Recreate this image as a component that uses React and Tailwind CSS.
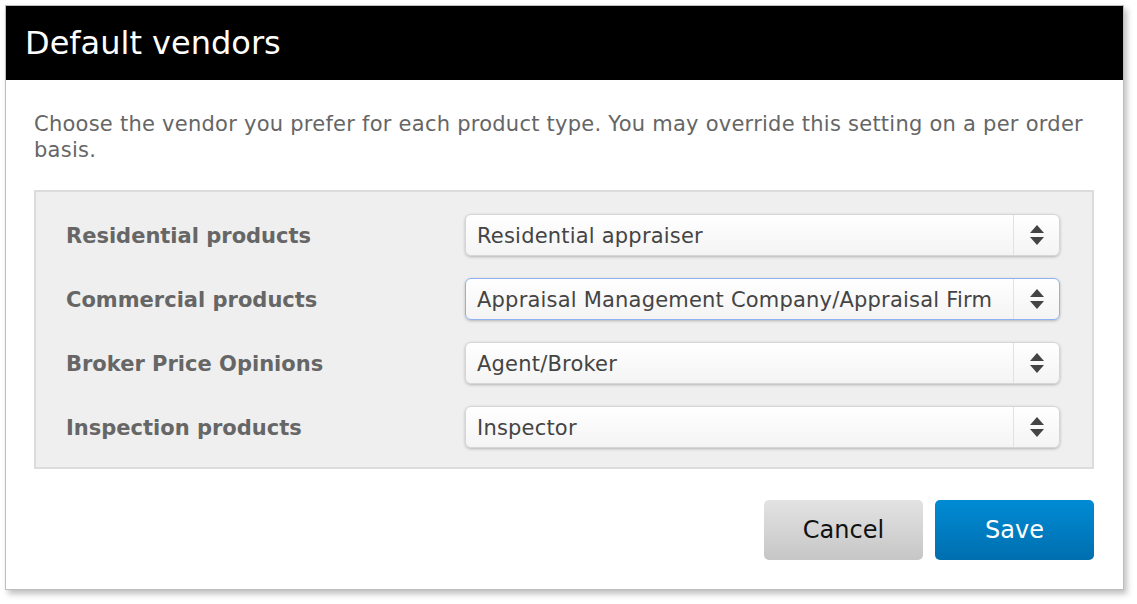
import React from 'react';

const rows = [
  { label: 'Residential products', value: 'Residential appraiser' },
  { label: 'Commercial products', value: 'Appraisal Management Company/Appraisal Firm', focused: true },
  { label: 'Broker Price Opinions', value: 'Agent/Broker' },
  { label: 'Inspection products', value: 'Inspector' },
];

function SelectBox({ value, focused }) {
  return (
    <div
      className={
        'flex h-[42px] w-[595px] items-stretch rounded-[6px] border bg-gradient-to-b from-white to-[#f4f4f4] shadow-[0_1px_3px_rgba(0,0,0,0.25)] ' +
        (focused ? 'border-[#8fb1ef]' : 'border-[#d6d6d6]')
      }
    >
      <div className="flex flex-1 items-center whitespace-nowrap pl-[11px] pt-[3px] text-[21px] tracking-[0.2px] text-[#444]">{value}</div>
      <div className="flex w-[46px] items-center justify-center border-l border-[#e2e2e2]">
        <svg width="16" height="24" viewBox="0 0 16 24">
          <polygon points="8,2 15,10 1,10" fill="#444" />
          <polygon points="1,14 15,14 8,22" fill="#444" />
        </svg>
      </div>
    </div>
  );
}

export default function App() {
  return (
    <div className="min-h-screen bg-white pl-[5px] pt-[5px] font-['DejaVu_Sans',Verdana,sans-serif]">
      <div className="w-[1119px] border border-[#bdbdbd] bg-white shadow-[3px_4px_6px_rgba(0,0,0,0.25)]">
        {/* Header */}
        <div className="flex h-[74px] items-center bg-black pl-[19px] text-[32px] text-white">
          Default vendors
        </div>

        {/* Body */}
        <div className="pb-[29px] pl-[28px] pr-[29px] pt-[31px]">
          <p className="text-[21px] leading-[26px] tracking-[0.25px] text-[#666]">
            Choose the vendor you prefer for each product type. You may override this setting on a per order basis.
          </p>

          <div className="mt-[27px] flex flex-col gap-[22px] border-2 border-[#dcdcdc] bg-[#efefef] pb-[19px] pl-[30px] pr-[31px] pt-[22px]">
            {rows.map((r) => (
              <div key={r.label} className="flex items-center">
                <div className="w-[399px] pt-[3px] text-[21px] font-bold text-[#666]">{r.label}</div>
                <SelectBox value={r.value} focused={r.focused} />
              </div>
            ))}
          </div>

          <div className="mt-[31px] flex justify-end gap-[12px]">
            <button className="h-[60px] w-[159px] rounded-[5px] bg-gradient-to-b from-[#e3e3e3] to-[#c6c6c6] text-[24px] text-[#111]">
              Cancel
            </button>
            <button className="h-[60px] w-[159px] rounded-[5px] bg-gradient-to-b from-[#008bd4] to-[#006faf] text-[24px] text-white">
              Save
            </button>
          </div>
        </div>
      </div>
    </div>
  );
}
